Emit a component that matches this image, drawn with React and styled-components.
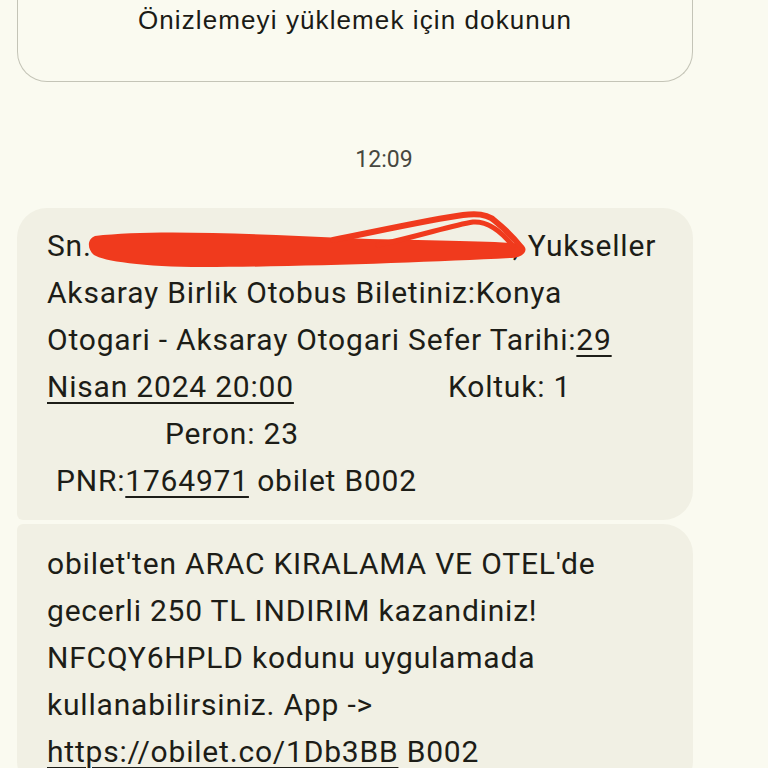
import React from "react";
import styled, { createGlobalStyle } from "styled-components";

const GlobalStyle = createGlobalStyle`
  html, body {
    margin: 0;
    padding: 0;
    background: #fafaf0;
  }
  body {
    font-family: Roboto, "Noto Sans", sans-serif;
    color: #1d1d17;
    overflow: hidden;
  }
`;

const Page = styled.div`
  width: 768px;
  height: 768px;
  overflow: hidden;
  display: flex;
  flex-direction: column;
  background: #fafaf0;
`;

const PreviewCard = styled.div`
  margin: 0 75px 0 17px;
  border: 1.5px solid #c4c4b7;
  border-top: none;
  border-radius: 0 0 30px 30px;
  padding: 2px 0 43px;
  display: flex;
  justify-content: center;
`;

const PreviewText = styled.span`
  font-family: "Liberation Sans", Arial, sans-serif;
  font-size: 26px;
  letter-spacing: 1.1px;
  line-height: 36px;
  color: #1b1b16;
`;

const TimeStamp = styled.div`
  margin-top: 63px;
  text-align: center;
  font-family: Roboto, sans-serif;
  font-size: 23px;
  line-height: 30px;
  color: #47473f;
`;

const Bubble = styled.div`
  margin: ${(p) => (p.$first ? "33px" : "4px")} 75px 0 17px;
  background: #f1f0e4;
  border-radius: ${(p) => (p.$first ? "30px 30px 30px 6px" : "6px 30px 30px 30px")};
  padding: ${(p) => (p.$first ? "14px 30px 16px" : "16px 30px 16px")};
  display: flex;
  flex-direction: column;
`;

const Line = styled.div`
  font-family: Roboto, sans-serif;
  font-size: 30px;
  letter-spacing: 0.8px;
  line-height: 47px;
  white-space: nowrap;
  color: #1d1d17;
  padding-left: ${(p) => p.$indent || 0}px;
`;

const Link = styled.span`
  text-decoration: underline;
  text-decoration-thickness: 2px;
  text-underline-offset: 5px;
`;

const DateCell = styled.span`
  display: inline-block;
  width: 401px;
`;

const RedactionSlot = styled.span`
  display: inline-block;
  position: relative;
  width: 421px;
  height: 47px;
  vertical-align: top;
`;

const Scribble = styled.svg`
  position: absolute;
  left: -9px;
  top: -17.5px;
  width: 450px;
  height: 70px;
  overflow: visible;
`;

function Redaction() {
  return (
    <RedactionSlot>
      <Scribble viewBox="80 205 450 70" aria-hidden="true">
        <path
          d="M 92 236 C 150 229, 250 234, 340 238 C 420 241, 480 240, 518 244 C 527 248, 522 258, 508 258 C 430 262, 300 267, 200 267 C 140 267, 100 261, 91 255 C 84 249, 84 239, 92 236 Z"
          fill="#f03a1d"
        />
        <path
          d="M 330 240 C 380 230, 430 219, 460 215 C 474 213, 486 215, 492 221 C 502 229, 510 237, 518 247"
          fill="none"
          stroke="#f03a1d"
          strokeWidth="6"
          strokeLinecap="round"
        />
        <path
          d="M 375 245 C 420 235, 450 225, 470 222 C 484 221, 498 231, 510 246"
          fill="none"
          stroke="#f03a1d"
          strokeWidth="5"
          strokeLinecap="round"
        />
      </Scribble>
    </RedactionSlot>
  );
}

export default function App() {
  return (
    <>
      <GlobalStyle />
      <Page>
        <PreviewCard>
          <PreviewText>Önizlemeyi yüklemek için dokunun</PreviewText>
        </PreviewCard>

        <TimeStamp>12:09</TimeStamp>

        <Bubble $first>
          <Line>
            Sn.
            <Redaction />, Yukseller
          </Line>
          <Line>Aksaray Birlik Otobus Biletiniz:Konya</Line>
          <Line>
            Otogari - Aksaray Otogari Sefer Tarihi:<Link>29</Link>
          </Line>
          <Line>
            <DateCell>
              <Link>Nisan 2024 20:00</Link>
            </DateCell>
            Koltuk: 1
          </Line>
          <Line $indent={118}>Peron: 23</Line>
          <Line $indent={9}>
            PNR:<Link>1764971</Link> obilet B002
          </Line>
        </Bubble>

        <Bubble>
          <Line>obilet'ten ARAC KIRALAMA VE OTEL'de</Line>
          <Line>gecerli 250 TL INDIRIM kazandiniz!</Line>
          <Line>NFCQY6HPLD kodunu uygulamada</Line>
          <Line>kullanabilirsiniz. App -&gt;</Line>
          <Line>
            <Link>https://obilet.co/1Db3BB</Link> B002
          </Line>
        </Bubble>
      </Page>
    </>
  );
}
